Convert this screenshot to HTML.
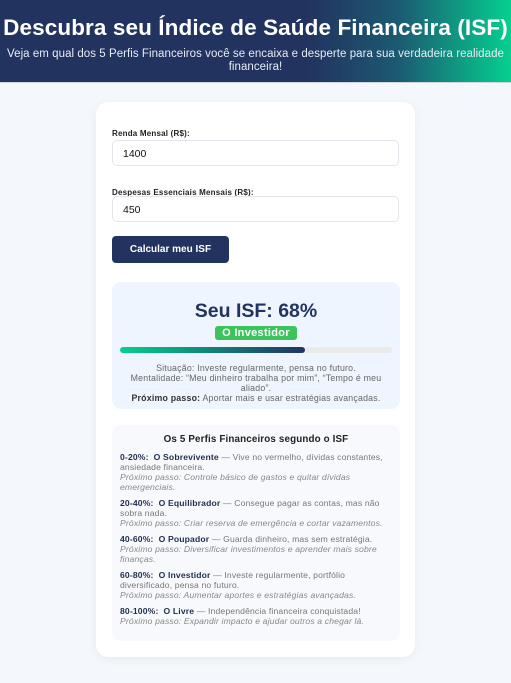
<!DOCTYPE html>
<html><head><meta charset="utf-8"><style>
*{box-sizing:border-box;margin:0;padding:0}
body{width:511px;height:683px;background:#f4f8fc;font-family:"Liberation Sans",sans-serif;color:#1f2d4f;overflow:hidden}
.hdr{height:83px;background:linear-gradient(90deg,#22335f 0%,#22335f 60%,#1c5a72 78%,#04d08f 100%);color:#fff;text-align:center;padding-top:14px;border-bottom:1px solid #cfd6e0}
.hdr h1{font-size:22.5px;font-weight:bold;letter-spacing:0.1px;line-height:28px}
.hdr p{font-size:11.5px;line-height:13px;margin-top:6px;color:#e6ecf3;padding:0 2px;letter-spacing:0.05px}
.card{position:absolute;left:96px;top:102px;width:319px;height:555px;background:#fff;border-radius:12px;box-shadow:0 2px 10px rgba(0,0,0,.06)}
.lbl{position:absolute;left:16px;font-size:8px;font-weight:bold;color:#222;letter-spacing:0.2px}
.inp{position:absolute;left:16px;width:287px;height:26px;border:1px solid #e2e6ec;border-radius:5px;font-size:10.5px;padding:7px 10px;color:#111}
.btn{position:absolute;left:16px;top:134px;width:117px;height:27px;background:#22335f;border-radius:4px;color:#fff;font-size:10px;font-weight:bold;text-align:center;line-height:27px}
.res{position:absolute;left:16px;top:180px;width:288px;height:127px;background:#eef5fe;border-radius:9px;text-align:center}
.res h2{font-size:19.5px;font-weight:bold;margin-top:18px;color:#22335f}
.tag{display:inline-block;background:#3cc35c;color:#fff;font-size:11px;font-weight:bold;padding:1px 7px;border-radius:3px;margin-top:1px;letter-spacing:0.3px}
.bar{position:absolute;left:8px;top:65px;width:272px;height:6px;background:#eaeaea;border-radius:3px}
.bar div{width:185px;height:6px;border-radius:3px;background:linear-gradient(90deg,#04d08f,#22335f)}
.txt{position:absolute;left:8px;right:8px;top:81px;font-size:8.8px;line-height:10px;color:#666;letter-spacing:0.2px}
.txt b{color:#333}
.prof{position:absolute;left:16px;top:323px;width:288px;height:216px;background:#f7f9fc;border-radius:9px;padding:10px 8px;font-size:8.6px;line-height:10px;color:#777;letter-spacing:0.15px}
.prof h3{text-align:center;font-size:9.8px;margin-bottom:7px;color:#222}
.prof p{margin-bottom:6px}
.prof b{color:#1f2d4f}
.prof i{color:#888}
</style></head><body>
<div class="hdr"><h1>Descubra seu Índice de Saúde Financeira (ISF)</h1><p>Veja em qual dos 5 Perfis Financeiros você se encaixa e desperte para sua verdadeira realidade<br>financeira!</p></div>
<div class="card">
<div class="lbl" style="top:27px">Renda Mensal (R$):</div>
<div class="inp" style="top:38px">1400</div>
<div class="lbl" style="top:86px">Despesas Essenciais Mensais (R$):</div>
<div class="inp" style="top:94px">450</div>
<div class="btn">Calcular meu ISF</div>
<div class="res"><h2>Seu ISF: 68%</h2><span class="tag">O Investidor</span><div class="bar"><div></div></div>
<div class="txt">Situação: Investe regularmente, pensa no futuro.<br>Mentalidade: “Meu dinheiro trabalha por mim”, “Tempo é meu aliado”.<br><b>Próximo passo:</b> Aportar mais e usar estratégias avançadas.</div></div>
<div class="prof"><h3>Os 5 Perfis Financeiros segundo o ISF</h3>
<p><b>0-20%:&nbsp; O Sobrevivente</b> — Vive no vermelho, dívidas constantes, ansiedade financeira.<br><i>Próximo passo: Controle básico de gastos e quitar dívidas emergenciais.</i></p>
<p><b>20-40%:&nbsp; O Equilibrador</b> — Consegue pagar as contas, mas não sobra nada.<br><i>Próximo passo: Criar reserva de emergência e cortar vazamentos.</i></p>
<p><b>40-60%:&nbsp; O Poupador</b> — Guarda dinheiro, mas sem estratégia.<br><i>Próximo passo: Diversificar investimentos e aprender mais sobre finanças.</i></p>
<p><b>60-80%:&nbsp; O Investidor</b> — Investe regularmente, portfólio diversificado, pensa no futuro.<br><i>Próximo passo: Aumentar aportes e estratégias avançadas.</i></p>
<p><b>80-100%:&nbsp; O Livre</b> — Independência financeira conquistada!<br><i>Próximo passo: Expandir impacto e ajudar outros a chegar lá.</i></p>
</div>
</div>
</body></html>
